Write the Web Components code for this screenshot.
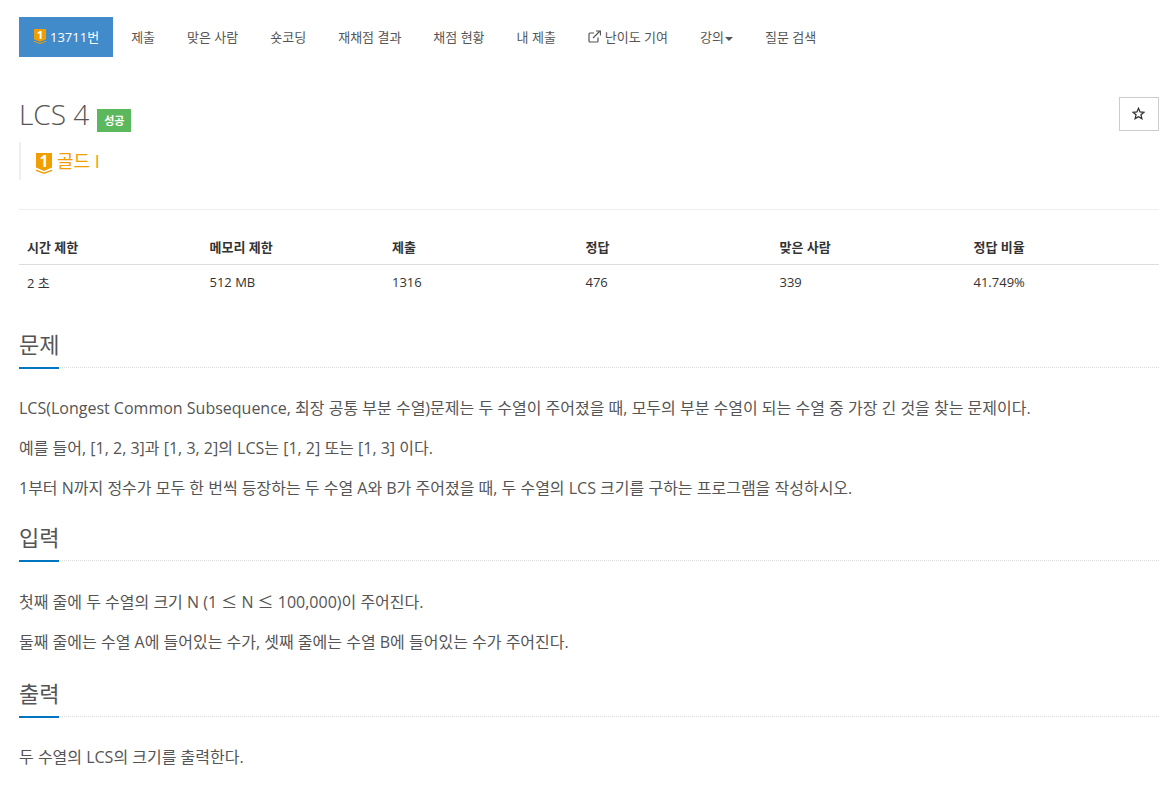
<!DOCTYPE html>
<html lang="ko"><head><meta charset="utf-8"><title>LCS 4</title>
<style>
html,body{margin:0;background:#fff}
body{font-family:"Open Sans","Noto Sans CJK KR",sans-serif;color:#555;overflow:hidden;height:798px}
</style></head><body>
<template id="medal-t"><style>:host{display:inline-block;line-height:0}svg{display:block;width:100%;height:100%;overflow:visible}text{font-family:"Open Sans",sans-serif;font-weight:700}</style>
<svg viewBox="0 0 16 21" preserveAspectRatio="none"><path d="M0 0H16V14.500L8 18L0 14.500Z" fill="#f19e00"/><path d="M0 16.500L8 19.500L16 16.500V18L8 21L0 18Z" fill="#f19e00"/><text x="8" y="13.500" text-anchor="middle" fill="#fff" style="font-size:15.500px">1</text></svg></template>

<boj-page></boj-page>

<script>
class Base extends HTMLElement{
  constructor(){super();this.attachShadow({mode:'open'});this.shadowRoot.innerHTML=this.constructor.html}
}
class Medal extends Base{static html=document.getElementById('medal-t').innerHTML}
customElements.define('boj-medal',Medal);
class NavTab extends Base{static html=`<style>:host{display:block;height:40px}
a{display:flex;align-items:center;height:40px;padding:0 16px 2px;font-size:13px;color:#555;text-decoration:none;white-space:nowrap;box-sizing:border-box}
:host([active]){margin-right:2px}
:host([active]) a{background:#428bca;color:#fff;padding:0 14px 1px 15px}
</style><a href="#"><slot></slot></a>`}
customElements.define('nav-tab',NavTab);
class ProblemMenu extends Base{static html=`<style>:host{display:flex;height:40px;margin-top:17px}</style><slot></slot>`}
customElements.define('problem-menu',ProblemMenu);
class ProblemHead extends Base{static html=`<style>:host{display:block;position:relative;margin-top:39px}
.row{display:flex;align-items:flex-start}
h1{margin:0;font-size:28px;font-weight:300;line-height:36px;color:#555}
.lbl{display:block;margin:13px 0 0 8px;width:34px;height:23px;background:#5cb85c;color:#fff;font-size:11px;font-weight:700;text-align:center;line-height:23px}
.star{margin:1px 0 0 auto;width:40px;height:34px;box-sizing:border-box;border:1px solid #ccc;display:flex;align-items:center;justify-content:center;padding:0 2px 2px 0}
.tier{margin-top:10px;height:38px;border-left:2px solid #eee;padding-left:15px;display:flex;align-items:center;gap:5px;color:#f19e00;font-size:18px;padding-bottom:2px;box-sizing:border-box}
boj-medal{width:16px;height:21px;margin-top:7px}
hr{border:0;border-top:1px solid #eee;margin:29px 0 0}
</style><div class="row"><h1>LCS 4</h1><span class="lbl">성공</span><div class="star"><svg width="13" height="13" viewBox="0 0 24 24" fill="none" stroke="#333" stroke-width="2.400"><path d="M12 2.500l2.900 6.600 7.100.7-5.400 4.700 1.600 7-6.200-3.700-6.200 3.700 1.600-7L2 9.800l7.100-.7z"/></svg></div></div>
<div class="tier"><boj-medal></boj-medal><span>골드 I</span></div><hr>`}
customElements.define('problem-head',ProblemHead);
class LimitTable extends Base{static html=`<style>:host{display:block;margin-top:19px}
table{border-collapse:collapse;width:100%;table-layout:fixed;font-size:13px;color:#333}
th{font-weight:700;text-align:left;padding:0 8px;height:35px;border-bottom:1px solid #ddd;box-sizing:border-box}
td{padding:0 8px;height:35px}
</style><table><colgroup><col style="width:182.500px"><col style="width:182.500px"><col style="width:193.500px"><col style="width:194px"><col style="width:194px"><col></colgroup>
<tr><th>시간 제한</th><th>메모리 제한</th><th>제출</th><th>정답</th><th>맞은 사람</th><th>정답 비율</th></tr>
<tr><td>2 초</td><td>512 MB</td><td>1316</td><td>476</td><td>339</td><td>41.749%</td></tr></table>`}
customElements.define('limit-table',LimitTable);
class ProblemSection extends Base{static html=`<style>:host{display:block}
.h{display:flex;height:50px;border-bottom:1px dotted #ddd;box-sizing:border-box}
h2{margin:0 0 -1px;font-size:22px;font-weight:400;line-height:30px;color:#555;height:51px;box-sizing:border-box;padding-top:11px;border-bottom:2px solid #0076c0;width:40px;white-space:nowrap}
.b{padding-top:28px}
:host([first]) .b{padding-top:28.400px}
</style><div class="h"><h2><slot name="t"></slot></h2></div><div class="b"><slot></slot></div>`}
customElements.define('problem-section',ProblemSection);
class BojPage extends Base{static html=`<style>:host{display:block;padding:0 15px 0 19px}
#p{margin-top:18px}
p{margin:0 0 14.300px;font-size:16px;line-height:25.600px}
p:last-child{margin-bottom:10.600px}
#p p:last-child{margin-bottom:10.200px}
.le{font-family:"Noto Sans CJK KR",sans-serif}
.caret{display:inline-block;border-top:4px solid #555;border-left:4px solid transparent;border-right:4px solid transparent;margin:6px 0 0 1px}
.ext{margin-right:4px;display:block}
nav-tab boj-medal{width:12px;height:15px;margin-right:4px}
</style>
<problem-menu>
<nav-tab active><boj-medal></boj-medal>13711번</nav-tab><nav-tab>제출</nav-tab><nav-tab>맞은 사람</nav-tab><nav-tab>숏코딩</nav-tab><nav-tab>재채점 결과</nav-tab><nav-tab>채점 현황</nav-tab><nav-tab>내 제출</nav-tab>
<nav-tab><svg class="ext" width="13" height="13" viewBox="0 0 13 13" fill="none" stroke="#555" stroke-width="1.200"><path d="M10 7.500V11a1 1 0 0 1-1 1H2a1 1 0 0 1-1-1V4a1 1 0 0 1 1-1h4"/><path d="M5 8L11.500 1.500M8 1h4.500v4.500"/></svg>난이도 기여</nav-tab>
<nav-tab>강의<span class="caret"></span></nav-tab><nav-tab>질문 검색</nav-tab>
</problem-menu>
<problem-head></problem-head>
<limit-table></limit-table>
<problem-section id="p" first><span slot="t">문제</span>
<p>LCS(Longest Common Subsequence, 최장 공통 부분 수열)문제는 두 수열이 주어졌을 때, 모두의 부분 수열이 되는 수열 중 가장 긴 것을 찾는 문제이다.</p>
<p>예를 들어, [1, 2, 3]과 [1, 3, 2]의 LCS는 [1, 2] 또는 [1, 3] 이다.</p>
<p>1부터 N까지 정수가 모두 한 번씩 등장하는 두 수열 A와 B가 주어졌을 때, 두 수열의 LCS 크기를 구하는 프로그램을 작성하시오.</p></problem-section>
<problem-section><span slot="t">입력</span>
<p>첫째 줄에 두 수열의 크기 N (1 <span class="le">≤</span> N <span class="le">≤</span> 100,000)이 주어진다.</p>
<p>둘째 줄에는 수열 A에 들어있는 수가, 셋째 줄에는 수열 B에 들어있는 수가 주어진다.</p></problem-section>
<problem-section><span slot="t">출력</span>
<p>두 수열의 LCS의 크기를 출력한다.</p></problem-section>`}
customElements.define('boj-page',BojPage);
</script>
</body></html>
